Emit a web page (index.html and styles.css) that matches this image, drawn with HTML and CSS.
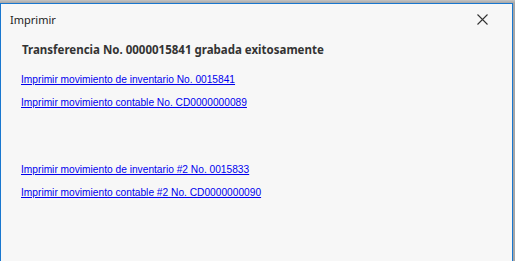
FILE: index.html
```html
<!DOCTYPE html>
<html lang="es">
<head>
    <meta charset="UTF-8">
    <meta name="viewport" content="width=device-width, initial-scale=1.0">
    <title>Imprimir</title>
    <link rel="stylesheet" href="styles.css">
</head>
<body>
    <div class="dialog">
        <div class="titlebar">
            <span class="title">Imprimir</span>
            <button class="close" aria-label="Cerrar">
                <svg width="11" height="11" viewBox="0 0 11 11">
                    <path d="M0.5 0.5 L10.5 10.5 M10.5 0.5 L0.5 10.5" stroke="#333" stroke-width="1.1" fill="none"/>
                </svg>
            </button>
        </div>
        <div class="content">
            <h1 class="message">Transferencia No. 0000015841 grabada exitosamente</h1>
            <div class="links">
                <a href="#">Imprimir movimiento de inventario No. 0015841</a>
                <a href="#">Imprimir movimiento contable No. CD0000000089</a>
            </div>
            <div class="links second">
                <a href="#">Imprimir movimiento de inventario #2 No. 0015833</a>
                <a href="#">Imprimir movimiento contable #2 No. CD0000000090</a>
            </div>
        </div>
    </div>
</body>
</html>
```

FILE: styles.css
```css
html, body{
    margin: 0;
    height: 100%;
    overflow: hidden;
}

body{
    background: linear-gradient(#c4c4c4, #a6a6a6 3px);
    padding-top: 3px;
    box-sizing: border-box;
    font-family: "Liberation Sans", Arial, sans-serif;
}

.dialog{
    width: 511px;
    height: 100%;
    background-color: #f7f7f7;
    border: 1px solid #1977cf;
    border-bottom: none;
}

.titlebar{
    height: 30px;
    display: flex;
    align-items: center;
    justify-content: space-between;
    padding: 0 24px 0 9px;
}

.title{
    font-family: "Noto Sans", sans-serif;
    font-size: 11px;
    color: #222;
    margin-top: 1px;
}

.close{
    border: none;
    background: none;
    padding: 0;
    width: 11px;
    height: 11px;
    display: flex;
}

.content{
    padding: 8px 20px 0 20px;
}

.message{
    margin: 0 0 16px 1px;
    font-family: "Noto Sans", sans-serif;
    font-size: 11.5px;
    font-weight: bold;
    color: #333;
}

.links{
    display: flex;
    flex-direction: column;
    align-items: flex-start;
    gap: 10px;
}

.links.second{
    margin-top: 54px;
}

.links a{
    font-size: 10.2px;
    color: #0000ee;
    line-height: 13px;
}
```
